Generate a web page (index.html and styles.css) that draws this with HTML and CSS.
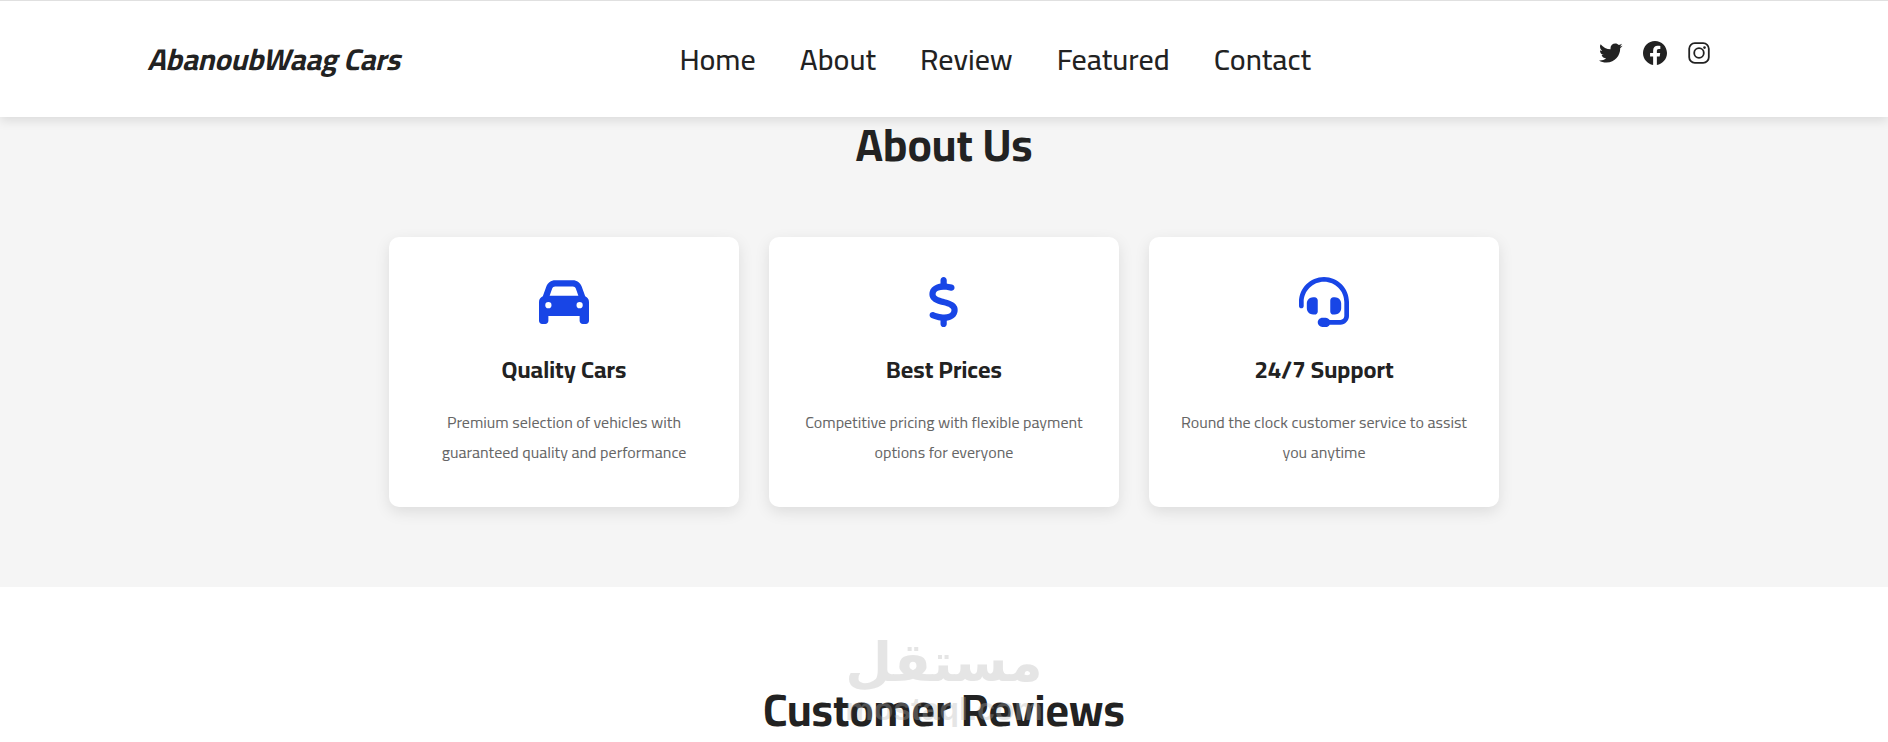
FILE: index.html
```html
<!DOCTYPE html>
<html lang="en">
<head>
    <meta charset="UTF-8">
    <meta name="viewport" content="width=device-width, initial-scale=1.0">
    <title>AbanoubWaag Cars</title>
    <link rel="stylesheet" href="styles.css">
</head>
<body>

    <header class="header">
        <a href="#home" class="logo">AbanoubWaag Cars</a>
        <nav class="navbar">
            <a href="#home">Home</a>
            <a href="#about">About</a>
            <a href="#review">Review</a>
            <a href="#featured">Featured</a>
            <a href="#contact">Contact</a>
        </nav>
        <div class="social">
            <a href="#" aria-label="Twitter">
                <svg viewBox="2 2 20 20"><path d="M19.633 7.997c.013.175.013.349.013.523 0 5.325-4.053 11.461-11.46 11.461-2.282 0-4.402-.661-6.186-1.809.324.037.636.05.973.05a8.07 8.07 0 0 0 5.001-1.721 4.036 4.036 0 0 1-3.767-2.793c.249.037.499.062.761.062.361 0 .724-.05 1.061-.137a4.027 4.027 0 0 1-3.23-3.953v-.05c.537.299 1.16.486 1.82.511a4.022 4.022 0 0 1-1.796-3.354c0-.748.199-1.434.548-2.032a11.457 11.457 0 0 0 8.306 4.215c-.062-.3-.1-.611-.1-.923a4.026 4.026 0 0 1 4.028-4.028c1.16 0 2.207.486 2.943 1.272a7.957 7.957 0 0 0 2.556-.973 4.02 4.02 0 0 1-1.771 2.22 8.073 8.073 0 0 0 2.319-.624 8.645 8.645 0 0 1-2.019 2.083z"/></svg>
            </a>
            <a href="#" aria-label="Facebook">
                <svg viewBox="0 0 24 24"><path d="M24 12.073C24 5.446 18.627 0 12 0S0 5.446 0 12.073c0 5.99 4.388 10.954 10.125 11.927v-8.51H7.078v-3.417h3.047V9.43c0-3.007 1.792-4.669 4.533-4.669 1.312 0 2.686.235 2.686.235v2.953H15.83c-1.491 0-1.956.925-1.956 1.874v2.25h3.328l-.532 3.417h-2.796V24C19.612 23.027 24 18.062 24 12.073z"/></svg>
            </a>
            <a href="#" aria-label="Instagram">
                <svg viewBox="0 0 24 24"><rect x="2.2" y="2.2" width="19.6" height="19.6" rx="5.6" fill="none" stroke="currentColor" stroke-width="1.8"/><circle cx="12" cy="12" r="4.8" fill="none" stroke="currentColor" stroke-width="1.8"/><circle cx="17.5" cy="6.6" r="1.3"/></svg>
            </a>
        </div>
    </header>

    <section class="about" id="about">
        <h2>About Us</h2>
        <div class="cards">
            <div class="card">
                <svg viewBox="0 0 512 512"><path d="M135 117 109 192h294l-26-75c-4-13-17-21-30-21H165c-13 0-26 8-30 21zM39 197 75 96c13-38 49-64 90-64h182c41 0 77 26 90 64l36 101c23 9 39 32 39 59v192c0 18-14 32-32 32h-32c-18 0-32-14-32-32v-48H96v48c0 18-14 32-32 32H32c-18 0-32-14-32-32V256c0-27 16-50 39-59zM128 288a32 32 0 1 0-64 0 32 32 0 1 0 64 0zm288 32a32 32 0 1 0 0-64 32 32 0 1 0 0 64z"/></svg>
                <h3>Quality Cars</h3>
                <p>Premium selection of vehicles with guaranteed quality and performance</p>
            </div>
            <div class="card">
                <svg viewBox="0 0 320 512"><path d="M160 0c17.700 0 32 14.300 32 32v35.700c1.600.2 3.100.4 4.700.7.400.1.700.1 1.100.2l48 8.800c17.400 3.200 28.900 19.900 25.700 37.200s-19.900 28.900-37.200 25.700l-47.500-8.700c-31.300-4.600-58.900-1.500-78.300 6.200s-27.200 18.300-29 28.100c-2 10.700-.5 16.700 1.200 20.400 1.800 3.900 5.500 8.300 12.800 13.200 16.300 10.700 41.300 17.700 73.700 26.300l2.900.8c28.600 7.600 63.600 16.800 89.600 33.800 14.200 9.300 27.600 21.900 35.900 39.500 8.500 17.900 10.300 37.900 6.400 59.200-6.900 38-33.100 63.400-65.600 76.700-13.700 5.600-28.600 9.200-44.400 11V480c0 17.700-14.300 32-32 32s-32-14.300-32-32v-34.900c-.4-.1-.9-.1-1.300-.2h-.2c-24.400-3.800-64.500-14.300-91.500-26.300-16.100-7.200-23.400-26.100-16.200-42.200s26.100-23.400 42.200-16.200c20.900 9.300 55.300 18.500 75.200 21.600 31.900 4.700 58.200 2 76-5.300 16.900-6.900 24.600-16.900 26.800-28.900 1.900-10.600.4-16.700-1.300-20.400-1.900-4-5.600-8.400-13-13.300-16.400-10.700-41.500-17.700-74-26.300l-2.800-.7c-28.600-7.600-63.700-16.900-89.600-33.900-14.200-9.300-27.500-22-35.800-39.600-8.400-17.900-10.100-37.900-6.100-59.200C23.700 116 52.300 91.200 84.800 78.300c13.300-5.300 27.900-8.900 43.200-11V32c0-17.700 14.300-32 32-32z"/></svg>
                <h3>Best Prices</h3>
                <p>Competitive pricing with flexible payment options for everyone</p>
            </div>
            <div class="card">
                <svg viewBox="0 0 512 512"><path d="M256 48C141 48 48 141 48 256v40c0 13-11 24-24 24S0 309 0 296v-40C0 115 115 0 256 0s256 115 256 256v144c0 49-39 88-88 88l-110 0c-8 14-24 24-42 24h-32c-27 0-48-22-48-48s21-48 48-48h32c18 0 34 10 42 24l110 0c22 0 40-18 40-40V256c0-115-93-208-208-208zM144 208h16c18 0 32 14 32 32v112c0 18-14 32-32 32h-16c-35 0-64-29-64-64v-48c0-35 29-64 64-64zm224 0c35 0 64 29 64 64v48c0 35-29 64-64 64h-16c-18 0-32-14-32-32V240c0-18 14-32 32-32h16z"/></svg>
                <h3>24/7 Support</h3>
                <p>Round the clock customer service to assist you anytime</p>
            </div>
        </div>
    </section>

    <section class="review" id="review">
        <h2>Customer Reviews</h2>
        <div class="watermark">
            <span class="mark-ar" lang="ar">مستقل</span>
            <span class="mark-en">mostaql.com</span>
        </div>
    </section>

</body>
</html>
```

FILE: styles.css
```css
/* General Styling */
* {
    margin: 0;
    padding: 0;
    box-sizing: border-box;
}

body {
    font-family: Cairo, "Noto Sans", sans-serif;
    background: #fff;
    color: #222;
}

a {
    color: inherit;
    text-decoration: none;
}

svg {
    display: block;
    fill: currentColor;
}

h2 {
    font-size: 45px;
    line-height: 56px;
    text-align: center;
}

/* Header */
.header {
    position: relative;
    display: flex;
    align-items: center;
    justify-content: space-between;
    height: 117px;
    padding: 0 9.4% 0 7.8%;
    background: #fff;
    border-top: 1px solid #e0e0e0;
    box-shadow: 0 4px 10px rgba(0, 0, 0, 0.1);
}

.logo {
    font-size: 30px;
    font-weight: 700;
    font-style: italic;
}

.navbar {
    display: flex;
    gap: 44px;
    font-size: 30px;
    font-weight: 500;
}

.social {
    display: flex;
    gap: 20px;
    padding: 0 0 12px 8px;
}

.social svg {
    width: 24px;
    height: 24px;
}

/* About */
.about {
    padding: 0 20px 80px;
    background: #f5f5f5;
}

.cards {
    display: flex;
    justify-content: center;
    gap: 30px;
    margin-top: 64px;
}

.card {
    width: 350px;
    padding: 40px 30px;
    background: #fff;
    border-radius: 10px;
    box-shadow: 0 5px 15px rgba(0, 0, 0, 0.1);
    text-align: center;
}

.card svg {
    height: 50px;
    margin: 0 auto 20px;
    color: #1845e6;
}

.card h3 {
    margin-bottom: 15px;
    font-size: 24px;
    line-height: 45px;
}

.card p {
    font-size: 16px;
    line-height: 30px;
    color: #666;
}

/* Review */
.review {
    position: relative;
    padding-top: 95px;
}

/* Watermark over the heading */
.watermark {
    position: absolute;
    top: 46px;
    left: 0;
    right: 0;
    display: flex;
    flex-direction: column;
    align-items: center;
    color: #b0b0b0;
    opacity: 0.32;
}

.mark-ar {
    font-family: "DejaVu Sans", sans-serif;
    font-size: 54px;
    font-weight: 700;
    line-height: 60px;
}

.mark-en {
    font-family: "Liberation Sans", sans-serif;
    font-size: 32px;
    font-weight: 700;
    line-height: 32px;
}
```
